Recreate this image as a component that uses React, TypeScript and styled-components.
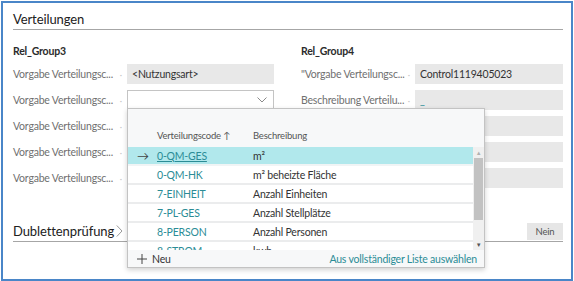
import React from "react";
import styled, { createGlobalStyle } from "styled-components";

const GlobalStyle = createGlobalStyle`
  body {
    margin: 0;
    background: #ffffff;
    font-family: Lato, "Noto Sans", sans-serif;
    letter-spacing: -0.2px;
  }
`;

const Frame = styled("div")`
  position: relative;
  margin: 1px;
  width: 572px;
  height: 280px;
  box-sizing: border-box;
  border: 2px solid #4a86c8;
  padding: 0 8px 0 10px;
  background: #fff;
  overflow: hidden;
`;

const SectionTitle = styled("div")`
  margin-top: 6px;
  height: 20px;
  line-height: 20px;
  font-size: 13px;
  letter-spacing: -0.1px;
  color: #212121;
  border-bottom: 1px solid #a6a6a6;
`;

const Columns = styled("div")`
  display: grid;
  grid-template-columns: 261px 262px;
  column-gap: 27px;
`;

const Group = styled("div")`
  display: flex;
  flex-direction: column;
  gap: 6px;
`;

const GroupTitle = styled("div")`
  margin-top: 13px;
  margin-bottom: -1px;
  line-height: 16px;
  font-size: 10.5px;
  font-weight: 700;
  color: #2b2b2b;
`;

const Row = styled("div")`
  display: flex;
  align-items: center;
  height: 20px;
`;

const Label = styled("div")`
  width: 114px;
  flex: none;
  display: flex;
  align-items: center;
  justify-content: space-between;
  padding-right: 5px;
  box-sizing: border-box;
  font-size: 10.5px;
  color: #707070;
  white-space: nowrap;
`;

const Dot = styled("span")`
  color: #c8c8c8;
  font-size: 9px;
`;

const Field = styled("div")<{ $select?: boolean }>`
  flex: 1;
  height: 20px;
  box-sizing: border-box;
  display: flex;
  align-items: center;
  justify-content: space-between;
  padding: 0 6px 0 5px;
  font-size: 10.5px;
  color: #333;
  background: ${(p) => (p.$select ? "#fff" : "#e8e8e8")};
  border: ${(p) => (p.$select ? "1px solid #c4c4c4" : "none")};
`;

const Blank = styled("span")`
  color: #2b8c96;
`;

const SubSection = styled("div")`
  margin-top: 33px;
  height: 20px;
  display: flex;
  align-items: flex-end;
  justify-content: space-between;
  border-bottom: 1px solid #a6a6a6;
`;

const SubTitle = styled("div")`
  line-height: 20px;
  font-size: 13px;
  letter-spacing: -0.1px;
  color: #212121;
  display: flex;
  align-items: center;
  gap: 2px;
`;

const NoButton = styled("div")`
  width: 36px;
  height: 17px;
  margin-bottom: 1px;
  background: #e6e6e6;
  font-size: 9.5px;
  color: #555;
  display: flex;
  align-items: center;
  justify-content: center;
`;

const Popup = styled("div")`
  position: absolute;
  left: 124px;
  top: 105px;
  width: 358px;
  height: 160px;
  box-sizing: border-box;
  border: 1px solid #c3c3c3;
  background: #f7f8f9;
  box-shadow: 0 2px 5px rgba(0, 0, 0, 0.18);
  display: flex;
  flex-direction: column;
`;

const ListHead = styled("div")`
  height: 38px;
  flex: none;
  display: flex;
  align-items: flex-end;
  padding-bottom: 6px;
  box-sizing: border-box;
  font-size: 9.5px;
  color: #555;
`;

const HeadCode = styled("span")`
  margin-left: 29px;
  width: 96px;
`;

const ListBody = styled("div")`
  display: flex;
  flex: none;
  height: 103px;
  overflow: hidden;
`;

const Rows = styled("div")`
  flex: 1;
  display: flex;
  flex-direction: column;
`;

const Item = styled("div")<{ $active?: boolean }>`
  flex: none;
  height: 17px;
  border-bottom: 2px solid ${(p) => (p.$active ? "#f0f4f5" : "#ebeced")};
  background: ${(p) => (p.$active ? "#b1e8ec" : "#fff")};
  display: flex;
  align-items: center;
  font-size: 10.5px;
  color: #333;
`;

const Arrow = styled("span")`
  width: 29px;
  padding-left: 9px;
  box-sizing: border-box;
  color: #444;
  font-size: 12px;
`;

const Code = styled("span")<{ $active?: boolean }>`
  width: 96px;
  color: #2b8c96;
  text-decoration: ${(p) => (p.$active ? "underline" : "none")};
`;

const Scrollbar = styled("div")`
  width: 11px;
  flex: none;
  background: #f0f0f0;
  display: flex;
  flex-direction: column;
  align-items: center;
`;

const ScrollArrow = styled("div")<{ $down?: boolean }>`
  height: 11px;
  display: flex;
  align-items: center;
  justify-content: center;
  color: ${(p) => (p.$down ? "#555" : "#b0b0b0")};
  font-size: 6px;
`;

const Thumb = styled("div")`
  width: 9px;
  height: 62px;
  background: #c2c2c2;
`;

const Spacer = styled("div")`
  flex: 1;
`;

const Footer = styled("div")`
  flex: 1;
  display: flex;
  align-items: center;
  justify-content: space-between;
  padding: 1px 7px 0 9px;
  font-size: 10.5px;
`;

const NewAction = styled("span")`
  color: #333;
  display: flex;
  align-items: center;
  gap: 5px;
`;

const Link = styled("span")`
  color: #2b8c96;
`;

const leftLabel = "Vorgabe Verteilungsc...";

const items = [
  { code: "0-QM-GES", text: "m²" },
  { code: "0-QM-HK", text: "m² beheizte Fläche" },
  { code: "7-EINHEIT", text: "Anzahl Einheiten" },
  { code: "7-PL-GES", text: "Anzahl Stellplätze" },
  { code: "8-PERSON", text: "Anzahl Personen" },
  { code: "8-STROM", text: "kwh" },
];

function LabelCell({ text }: { text?: string }) {
  return (
    <Label>
      <span>{text}</span>
      <Dot>·</Dot>
    </Label>
  );
}

export default function App() {
  return (
    <>
      <GlobalStyle />
      <Frame>
        <SectionTitle>Verteilungen</SectionTitle>
        <Columns>
          <Group>
            <GroupTitle>Rel_Group3</GroupTitle>
            <Row>
              <LabelCell text={leftLabel} />
              <Field>&lt;Nutzungsart&gt;</Field>
            </Row>
            <Row>
              <LabelCell text={leftLabel} />
              <Field $select>
                <span />
                <svg width="10" height="6" viewBox="0 0 10 6">
                  <polyline points="0.5,0.5 5,5 9.5,0.5" fill="none" stroke="#8a8a8a" strokeWidth="1" />
                </svg>
              </Field>
            </Row>
            <Row>
              <LabelCell text={leftLabel} />
              <Field />
            </Row>
            <Row>
              <LabelCell text={leftLabel} />
              <Field />
            </Row>
            <Row>
              <LabelCell text={leftLabel} />
              <Field />
            </Row>
          </Group>
          <Group>
            <GroupTitle>Rel_Group4</GroupTitle>
            <Row>
              <LabelCell text={'"Vorgabe Verteilungsc...'} />
              <Field>Control1119405023</Field>
            </Row>
            <Row>
              <LabelCell text="Beschreibung Verteilu..." />
              <Field>
                <Blank>_</Blank>
              </Field>
            </Row>
            <Row>
              <LabelCell />
              <Field />
            </Row>
            <Row>
              <LabelCell />
              <Field />
            </Row>
            <Row>
              <LabelCell />
              <Field />
            </Row>
          </Group>
        </Columns>
        <SubSection>
          <SubTitle>
            Dublettenprüfung
            <svg width="7" height="12" viewBox="0 0 7 12">
              <polyline points="0.8,0.5 6,6 0.8,11.5" fill="none" stroke="#9a9a9a" strokeWidth="1" />
            </svg>
          </SubTitle>
          <NoButton>Nein</NoButton>
        </SubSection>

        <Popup>
          <ListHead>
            <HeadCode>Verteilungscode ↑</HeadCode>
            <span>Beschreibung</span>
          </ListHead>
          <ListBody>
            <Rows>
              {items.map((it, i) => (
                <Item key={it.code} $active={i === 0}>
                  <Arrow>{i === 0 ? "→" : ""}</Arrow>
                  <Code $active={i === 0}>{it.code}</Code>
                  <span>{it.text}</span>
                </Item>
              ))}
            </Rows>
            <Scrollbar>
              <ScrollArrow>▲</ScrollArrow>
              <Thumb />
              <Spacer />
              <ScrollArrow $down>▼</ScrollArrow>
            </Scrollbar>
          </ListBody>
          <Footer>
            <NewAction>
              <svg width="10" height="10" viewBox="0 0 10 10">
                <path d="M5 0v10M0 5h10" stroke="#444" strokeWidth="1" />
              </svg>
              Neu
            </NewAction>
            <Link>Aus vollständiger Liste auswählen</Link>
          </Footer>
        </Popup>
      </Frame>
    </>
  );
}
